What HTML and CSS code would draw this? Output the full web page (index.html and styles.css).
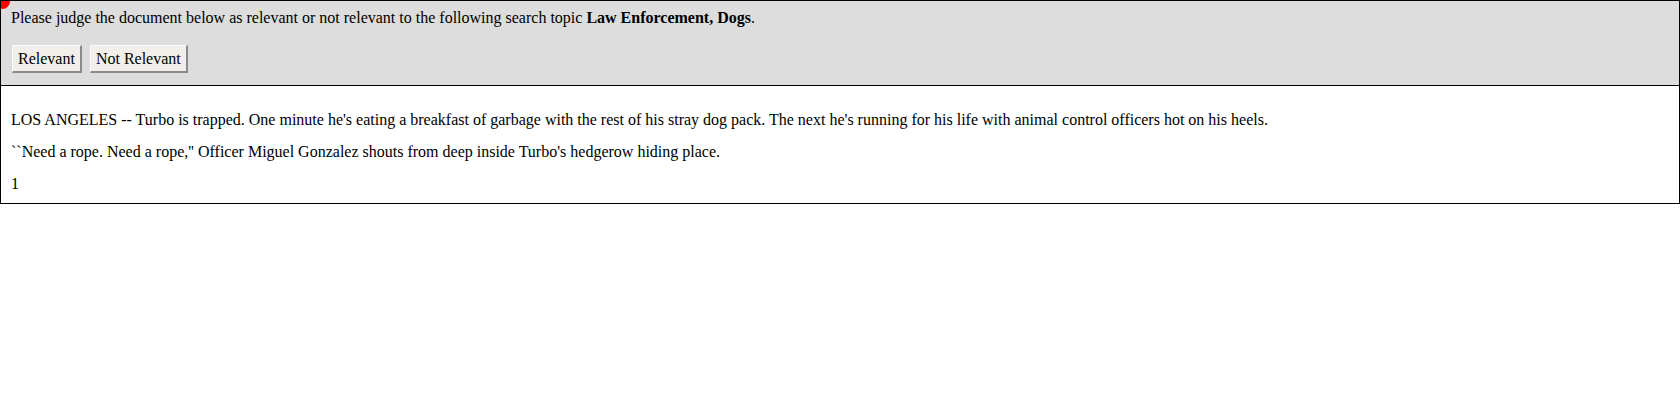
FILE: index.html
```html
<!DOCTYPE html>
<html>
<head>
<meta charset="utf-8">
<link rel="stylesheet" href="styles.css">
</head>
<body>
<div class="frame">
  <span class="dot"></span>
  <div class="header">
    <p class="prompt">Please judge the document below as relevant or not relevant to the following search topic <b>Law Enforcement, Dogs</b>.</p>
    <div class="buttons">
      <button class="btn">Relevant</button>
      <button class="btn">Not Relevant</button>
    </div>
  </div>
  <div class="doc">
    <p>LOS ANGELES -- Turbo is trapped. One minute he's eating a breakfast of garbage with the rest of his stray dog pack. The next he's running for his life with animal control officers hot on his heels.</p>
    <p>``Need a rope. Need a rope,'' Officer Miguel Gonzalez shouts from deep inside Turbo's hedgerow hiding place.</p>
    <p>1</p>
  </div>
</div>
</body>
</html>
```
FILE: styles.css
```css
html, body {
  margin: 0;
  padding: 0;
  background: #fff;
}
body {
  font-family: "Liberation Serif", "Times New Roman", serif;
  font-size: 16px;
  color: #000;
}
.frame {
  position: relative;
  border: 1px solid #000;
  width: 1678px;
  overflow: hidden;
}
.dot {
  position: absolute;
  left: -6px;
  top: -7px;
  width: 15px;
  height: 15px;
  border-radius: 50%;
  background: #f00;
}
.header {
  background: #dddddd;
  border-bottom: 1px solid #000;
  padding: 8px 10px 12px;
}
.prompt {
  margin: 0;
  line-height: 18px;
}
.buttons {
  display: flex;
  gap: 8px;
  margin-top: 18px;
  padding-left: 1px;
}
.btn {
  font-family: "Liberation Serif", "Times New Roman", serif;
  font-size: 16px;
  color: #000;
  background: #f2efea;
  border-style: solid;
  border-width: 1px 2px 2px 1px;
  border-color: #fafafa #8a8a8a #8a8a8a #fafafa;
  padding: 4px 5px 3px;
  height: 28px;
  line-height: 18px;
  margin: 0;
}
.doc {
  padding: 7px 10px 10px;
}
.doc p {
  margin: 18px 0 0;
  line-height: 18px;
}
.doc p + p {
  margin-top: 14px;
}
```
